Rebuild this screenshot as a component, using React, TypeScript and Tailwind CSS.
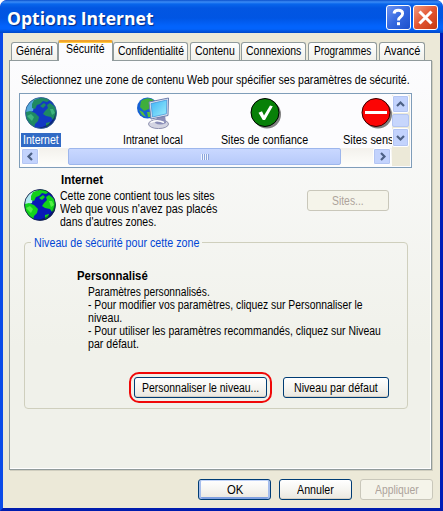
import React, { useLayoutEffect, useRef, useState } from "react";
import clsx from "clsx";

/* Label whose glyphs are condensed or widened to occupy exactly `w` pixels. */
function T({ w, className, children }: { w: number; className?: string; children: string }) {
  const ref = useRef<HTMLSpanElement>(null);
  const [scale, setScale] = useState(1);
  useLayoutEffect(() => {
    if (ref.current) setScale(w / ref.current.offsetWidth);
  }, [w]);
  return (
    <span className={clsx("block shrink-0 whitespace-nowrap", className)} style={{ width: w }}>
      <span ref={ref} className="inline-block origin-left" style={{ transform: `scaleX(${scale})` }}>
        {children}
      </span>
    </span>
  );
}

function Tab({ w, tw, className, children }: { w: number; tw: number; className?: string; children: string }) {
  return (
    <div
      className={clsx(
        "flex h-[18px] shrink-0 justify-center rounded-t-[3px] border border-b-0 border-[#919b9c] bg-linear-to-b from-white to-[#f0f0ea] pt-[2px]",
        className,
      )}
      style={{ width: w }}
    >
      <T w={tw}>{children}</T>
    </div>
  );
}

function Button({
  w,
  tw,
  kind = "normal",
  children,
}: {
  w: number;
  tw: number;
  kind?: "normal" | "default" | "disabled";
  children: string;
}) {
  return (
    <button
      className={clsx(
        "flex h-[21px] shrink-0 justify-center rounded-[3px] border pt-[4px]",
        kind === "disabled"
          ? "border-[#c9c7ba] bg-[#f5f4ea] text-[#ada39b]"
          : "border-[#003c74] bg-linear-to-b from-white via-[#f6f5f1] to-[#eae7df]",
        kind === "normal" && "shadow-[inset_0_-1px_0_#d6d0c5]",
        kind === "default" && "shadow-[inset_0_1px_0_#c2d4f7,inset_2px_0_0_#a5bdec,inset_-2px_0_0_#a5bdec,inset_0_-2px_0_#7f9fe0]",
      )}
      style={{ width: w }}
    >
      <T w={tw}>{children}</T>
    </button>
  );
}

function Globe({ bright = false }: { bright?: boolean }) {
  const sea = bright ? "#0818b8" : "#1238c4";
  const land = bright ? "#12d21c" : "#1e8a62";
  const clip = bright ? "globe-bright" : "globe-muted";
  return (
    <svg className="block h-8 w-8 shrink-0" viewBox="0 0 32 32">
      <defs>
        <clipPath id={clip}>
          <circle cx="16" cy="16" r="15.5" />
        </clipPath>
      </defs>
      <g clipPath={`url(#${clip})`}>
        <rect width="32" height="32" fill={sea} />
        <path d="M2 8L7 2L14 1L13 6L9 9L8 14L2 16L0 14Z" fill={bright ? "#b4eaf0" : "#55a9dc"} />
        <path d="M7 7L9 3L15 1L21 0L25 3L22 5L18 4L15 7L12 8L10 12L7 11Z" fill={land} />
        <path d="M1 15L5 14L10 16L14 20L13 24L10 27L9 31L4 27L1 22Z" fill={land} />
        <path d="M20 14L23 11L22 8L25 6L29 9L32 14L31 21L28 23L26 20L21 19L18 17Z" fill={land} />
        <path d="M15 9L19 6L21 8L18 11Z M21 26L25 25L24 29L21 30Z" fill={land} />
        <path d="M2 19L6 17L9 20L7 24Z M25 12L28 12L30 16L27 18Z" fill={bright ? "#52ef45" : "#3eb47e"} />
        <path d="M31 10Q31 28 13 31L20 32L32 29Z" fill="#06103c" opacity=".5" />
      </g>
      <circle cx="16" cy="16" r="15.5" fill="none" stroke={bright ? "#10203a" : "#315f8d"} strokeWidth=".8" />
    </svg>
  );
}

function IntranetIcon() {
  return (
    <svg className="block h-8 w-[33px]" viewBox="0 0 33 32">
      <defs>
        <linearGradient id="screen" x1="0" y1="0" x2="1" y2="1">
          <stop offset="0" stopColor="#3fb4f5" />
          <stop offset="1" stopColor="#9beefc" />
        </linearGradient>
      </defs>
      <circle cx="10.5" cy="11" r="10.5" fill="#1560d4" />
      <path d="M4 4Q10-1 17 3L13 7L12 12L7 14L3 10Z" fill="#3fae3c" />
      <path d="M2 13L6 15L9 20L5 18Z M10 15L14 15L14 20L11 20Z" fill="#54bd41" />
      <ellipse cx="21.5" cy="27" rx="10" ry="4.6" fill="#d3d4e2" stroke="#8589a8" strokeWidth=".9" />
      <path d="M20 20L28 18L29 26Q23 29 18 26Z" fill="#8a8eb8" />
      <path d="M12 5L31.5 1L31 18.5L14 22Z" fill="#dde3f0" stroke="#6f7fae" strokeWidth="1" />
      <path d="M14 6.6L29.8 3L29.4 16.8L15.6 20Z" fill="url(#screen)" stroke="#3d8fd8" strokeWidth=".7" />
      <path d="M13.5 25.5Q20 22 27 25.5" fill="none" stroke="#fff" strokeWidth="1.4" />
    </svg>
  );
}

function CheckIcon() {
  return (
    <svg className="block h-8 w-8" viewBox="0 0 32 32">
      <circle cx="17" cy="17.5" r="14" fill="#808080" />
      <circle cx="15" cy="15.5" r="14" fill="#088008" stroke="#000" />
      <path d="M8.5 15.8L12 14.2L14 18.5L20 8.5L22.8 9.2L15 23L12.8 23Z" fill="#fff" />
    </svg>
  );
}

function StopIcon() {
  return (
    <svg className="block h-8 w-8" viewBox="0 0 32 32">
      <circle cx="17" cy="17.5" r="14" fill="#808080" />
      <circle cx="15" cy="15.5" r="14" fill="#fc0404" stroke="#300" />
      <rect x="4" y="14" width="22" height="3" fill="#fff" />
    </svg>
  );
}

function Arrow({ d, className }: { d: string; className: string }) {
  return (
    <div className={clsx("flex shrink-0 items-center justify-center rounded-[2px] border border-white bg-[#c3d3fd] shadow-[inset_0_0_0_1px_#b3c5f3]", className)}>
      <svg className="h-[9px] w-[9px]" viewBox="0 0 9 9">
        <path d={d} fill="none" stroke="#4d6185" strokeWidth="2.2" />
      </svg>
    </div>
  );
}

function TitleBar() {
  return (
    <div className="flex h-[33px] shrink-0 rounded-t-[7px] bg-[linear-gradient(#0a50cc_0px,#3b8cf6_2px,#0866ec_4px,#0256e2_8px,#0055e3_18px,#0263fc_26px,#0263fc_29px,#0048c8_33px)] pt-[5px] pl-[7px]">
      <T
        w={147}
        className="mt-px h-6 font-['Open_Sans',sans-serif] text-[18.5px] leading-6 font-bold text-white [text-shadow:1px_1px_1px_#0a2a80]"
      >
        Options Internet
      </T>
      <div className="ml-[232px] flex gap-[2px]">
        <div className="flex h-[25px] w-[25px] items-center justify-center rounded-[3px] border border-white bg-linear-to-br from-[#6e93f0] via-[#3468e0] to-[#1c50cc]">
          <svg className="h-[19px] w-[15px]" viewBox="0 0 15 19">
            <path d="M3 5.5Q3.5 2.3 7.3 2.3Q11.6 2.3 11.6 5.5Q11.6 7.5 9.5 9Q7.5 10.3 7.5 12.5" fill="none" stroke="#fff" strokeWidth="2.9" />
            <rect x="6" y="14.2" width="3" height="3" fill="#fff" />
          </svg>
        </div>
        <div className="flex h-[25px] w-[25px] items-center justify-center rounded-[3px] border border-white bg-linear-to-br from-[#f0987c] via-[#e25430] to-[#c43a12]">
          <svg className="h-[15px] w-[15px]" viewBox="0 0 15 15">
            <path d="M1.5 1.5L13.5 13.5M13.5 1.5L1.5 13.5" stroke="#fff" strokeWidth="3" />
          </svg>
        </div>
      </div>
    </div>
  );
}

function ZoneList() {
  return (
    <div className="ml-[9px] flex h-[75px] w-[393px] border border-[#7f9db9] bg-[#fcfcfe] pt-px pl-px">
      <div className="w-[371px]">
        <div className="flex h-[53px] overflow-hidden pt-[2px]">
          <div className="w-10 shrink-0">
            <div className="ml-1">
              <Globe />
            </div>
            <div className="mt-1 flex h-[14px] w-10 justify-center bg-[#316ac5] pt-px text-white">
              <T w={36}>Internet</T>
            </div>
          </div>
          <div className="ml-[62px] w-[60px] shrink-0">
            <div className="ml-[14px]">
              <IntranetIcon />
            </div>
            <T w={60} className="mt-[5px]">Intranet local</T>
          </div>
          <div className="ml-[38px] w-[87px] shrink-0">
            <div className="ml-[29px]">
              <CheckIcon />
            </div>
            <T w={87} className="mt-[5px]">Sites de confiance</T>
          </div>
          <div className="ml-[35px] w-[73px] shrink-0">
            <div className="ml-[18px]">
              <StopIcon />
            </div>
            <T w={73} className="mt-[5px]">Sites sensibles</T>
          </div>
        </div>
        <div className="flex h-[18px] bg-linear-to-b from-[#f3f1ec] to-[#fefefb]">
          <Arrow d="M6 1L2.5 4.5L6 8" className="h-[17px] w-[18px]" />
          <div className="ml-[29px] flex h-[17px] w-[273px] items-center justify-center gap-px rounded-[2px] border border-[#9db6ec] bg-linear-to-b from-[#c9d8ff] to-[#b7cafa]">
            {[0, 1, 2, 3].map((i) => (
              <div key={i} className="h-[6px] w-px bg-[#eef4fe] shadow-[1px_0_0_#8ca5dc]" />
            ))}
          </div>
          <Arrow d="M3 1L6.5 4.5L3 8" className="ml-8 h-[17px] w-[18px]" />
        </div>
      </div>
      <div className="flex h-[71px] w-[18px] flex-col bg-[#ece9d8]">
        <Arrow d="M1 6L4.5 2.5L8 6" className="h-[18px] w-[17px]" />
        <div className="my-px h-[13px] w-[17px] shrink-0 rounded-[2px] border border-[#b3c5f3] bg-[#c7d6fc]" />
        <Arrow d="M1 3L4.5 6.5L8 3" className="h-[19px] w-[17px]" />
      </div>
    </div>
  );
}

export default function App() {
  return (
    <div className="h-[511px] w-[443px] bg-white">
      <div className="flex h-[511px] w-[443px] flex-col overflow-hidden rounded-t-[7px] bg-[#0831d9] font-['Liberation_Sans',Arial,sans-serif] text-[12px] leading-[13px] text-black">
        <TitleBar />
        <div className="flex h-[478px] border-t-0 border-r-[3px] border-b-[3px] border-l-[3px] border-r-[#001db8] border-b-[#001cae] border-l-[#0b4be8] bg-[#ece9d8]">
          <div className="w-[437px] pt-[7px] pl-[6px]">
            <div className="flex h-5 items-end pl-[2px]">
              <Tab w={47} tw={37}>Général</Tab>
              <div className="z-10 -mb-px flex h-[21px] w-[55px] shrink-0 justify-center rounded-t-[2px] border-x border-t-2 border-x-[#919b9c] border-t-[#f2a32c] bg-[#fcfcfe] pt-px shadow-[inset_0_1px_0_#ffc83c]">
                <T w={38.5}>Sécurité</T>
              </div>
              <Tab w={75} tw={66}>Confidentialité</Tab>
              <Tab w={50} tw={39.5} className="ml-[2px]">Contenu</Tab>
              <Tab w={65} tw={55} className="ml-[1px]">Connexions</Tab>
              <Tab w={69} tw={57.5} className="ml-[2px]">Programmes</Tab>
              <Tab w={46} tw={36.5} className="ml-[2px]">Avancé</Tab>
            </div>
            <div className="h-[410px] w-[423px] border border-[#919b9c] bg-linear-to-b from-[#fcfcfe] to-[#f0f1ea] to-70% shadow-[inset_-1px_-1px_0_white,1px_1px_0_#d0cebf]">
              <T w={389} className="mt-[13px] ml-[11px]">
                Sélectionnez une zone de contenu Web pour spécifier ses paramètres de sécurité.
              </T>
              <div className="mt-[6px]">
                <ZoneList />
              </div>
              <div className="mt-[5px] ml-[14px] flex">
                <div className="mt-4">
                  <Globe bright />
                </div>
                <div className="ml-1 w-[247px] pt-px">
                  <T w={42} className="mb-[3px] ml-px font-bold">Internet</T>
                  <T w={154.5}>Cette zone contient tous les sites</T>
                  <T w={157.5}>Web que vous n'avez pas placés</T>
                  <T w={96}>dans d'autres zones.</T>
                </div>
                <div className="mt-[17px]">
                  <Button w={82} tw={32} kind="disabled">Sites...</Button>
                </div>
              </div>
              <fieldset className="mt-[7px] ml-[14px] h-[173px] w-[384px] rounded-[4px] border border-[#cfcfbd]">
                <legend className="ml-[6px] px-[3px] text-[#0046d5]">
                  <T w={165} className="relative top-px">Niveau de sécurité pour cette zone</T>
                </legend>
                <div className="ml-[52px] pt-[21px]">
                  <T w={71} className="font-bold">Personnalisé</T>
                  <div className="mt-[3px] ml-[11px]">
                    <T w={122}>Paramètres personnalisés.</T>
                    <T w={274.5}>- Pour modifier vos paramètres, cliquez sur Personnaliser le</T>
                    <T w={34.5}>niveau.</T>
                    <T w={292.5}>- Pour utiliser les paramètres recommandés, cliquez sur Niveau</T>
                    <T w={50.5}>par défaut.</T>
                  </div>
                </div>
                <div className="mt-[21px] ml-[104px] flex items-center">
                  <div className="rounded-[10px] border-2 border-[#f00808] p-[3px]">
                    <Button w={133} tw={117.5}>Personnaliser le niveau...</Button>
                  </div>
                  <div className="ml-[11px]">
                    <Button w={106} tw={84}>Niveau par défaut</Button>
                  </div>
                </div>
              </fieldset>
            </div>
            <div className="mt-[9px] ml-[189px] flex gap-2">
              <Button w={73} tw={16} kind="default">OK</Button>
              <Button w={73} tw={36.5}>Annuler</Button>
              <Button w={73} tw={44} kind="disabled">Appliquer</Button>
            </div>
          </div>
        </div>
      </div>
    </div>
  );
}
